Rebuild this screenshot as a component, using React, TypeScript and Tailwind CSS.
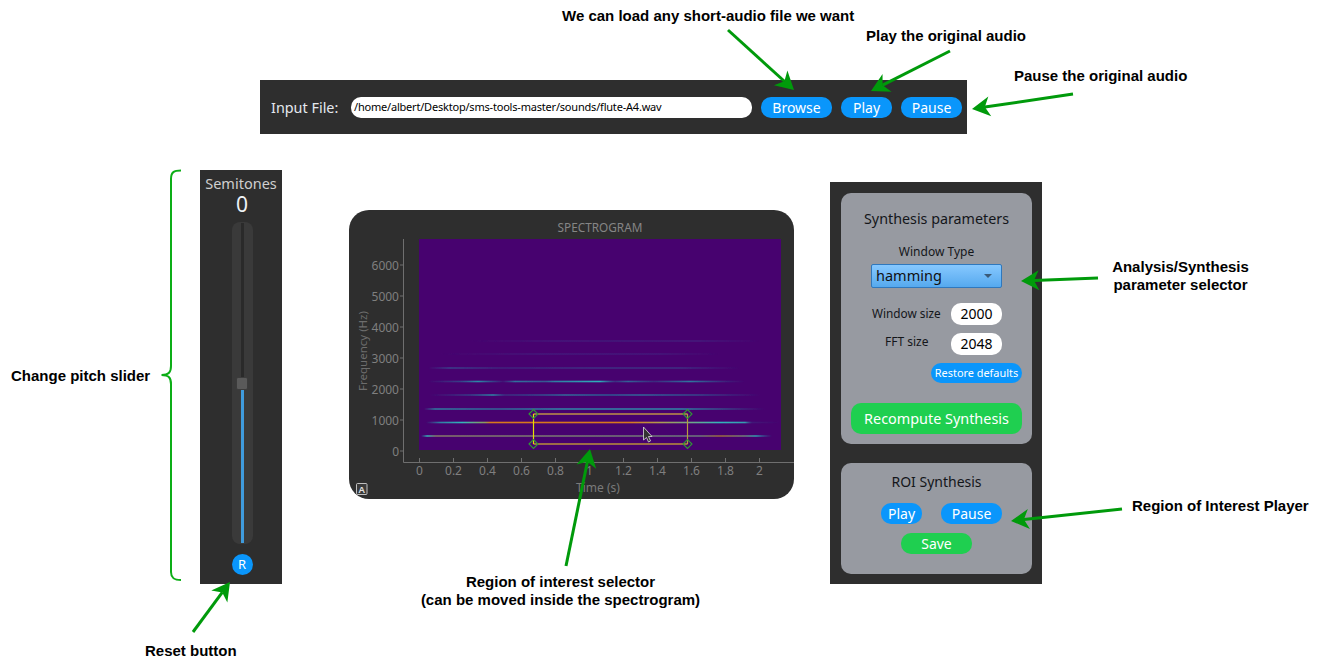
const uiFont = "font-['Noto_Sans',sans-serif]"

const labels = [
	{ text: 'We can load any short-audio file we want', cls: 'left-[562px] top-[7px]' },
	{ text: 'Play the original audio', cls: 'left-[866px] top-[27px]' },
	{ text: 'Pause the original audio', cls: 'left-[1014px] top-[67px]' },
	{ text: 'Change pitch slider', cls: 'left-[11px] top-[367px]' },
	{ text: 'Reset button', cls: 'left-[145px] top-[642px]' },
	{ text: 'Region of Interest Player', cls: 'left-[1132px] top-[497px]' },
]

const arrows = [
	[728, 30, 794, 90],
	[950, 51, 871, 91],
	[1073, 94, 972, 109],
	[1098, 278, 1021, 281],
	[1122, 509, 1011, 521],
	[566, 566, 590, 449],
	[193, 632, 230, 582],
]

// colormap-ish stops for the harmonics: [x, colour, opacity]
type Stop = [number, string, number]
const harmonics: { y: number; h: number; stops: Stop[] }[] = [
	{ y: 341, h: 1.2, stops: [[470, '#3b4f96', 0], [560, '#3b4f96', 0.35], [700, '#3b4f96', 0.4], [760, '#3b4f96', 0]] },
	{ y: 354, h: 1.2, stops: [[440, '#3b4f96', 0], [540, '#3b4f96', 0.35], [660, '#3b4f96', 0.35], [720, '#3b4f96', 0]] },
	{ y: 368, h: 1.4, stops: [[428, '#33609a', 0], [450, '#33609a', 0.7], [500, '#33609a', 0.35], [590, '#33609a', 0.5], [680, '#33609a', 0.5], [740, '#33609a', 0]] },
	{ y: 381.5, h: 1.6, stops: [[428, '#2a6f9c', 0], [460, '#2a6f9c', 0.55], [478, '#2c8ca8', 1], [495, '#2a6f9c', 0.5], [503, '#2a6f9c', 0.15], [515, '#2c8ca8', 0.8], [545, '#2c8ca8', 0.6], [555, '#2c8ca8', 0.9], [600, '#2fb0bb', 1], [615, '#2a6f9c', 0.4], [628, '#2c8ca8', 0.7], [654, '#2a6f9c', 0.35], [690, '#2c8ca8', 0.85], [730, '#2a6f9c', 0.2], [745, '#2a6f9c', 0]] },
	{ y: 395, h: 1.6, stops: [[430, '#2a6f9c', 0], [470, '#2a6f9c', 0.5], [493, '#2c8ca8', 0.9], [505, '#2a6f9c', 0.35], [540, '#2a6f9c', 0.6], [565, '#2c8ca8', 0.7], [610, '#2a6f9c', 0.7], [640, '#2c7ea4', 0.75], [700, '#2a6f9c', 0.55], [750, '#2a6f9c', 0.1], [760, '#2a6f9c', 0]] },
	{ y: 409, h: 1.6, stops: [[424, '#2a8fa8', 0], [435, '#2a8fa8', 0.8], [500, '#2a8fa8', 0.65], [560, '#2a9bb0', 0.8], [680, '#2a9bb0', 0.8], [725, '#2a7f9e', 0.5], [765, '#2a6f9c', 0]] },
	{ y: 422.5, h: 1.6, stops: [[426, '#2a8fa8', 0], [440, '#2a9bb0', 0.8], [462, '#33b5bb', 1], [485, '#8f9a5a', 1], [490, '#d8781e', 1], [630, '#d8781e', 1], [660, '#b09a50', 1], [720, '#33b5bb', 1], [745, '#33b5bb', 0.85], [752, '#2a6f9c', 0.2], [780, '#2a6f9c', 0]] },
	{ y: 436, h: 1.6, stops: [[421, '#2a8fa8', 0], [427, '#33a8b8', 1], [436, '#84776a', 0.95], [700, '#6c767c', 0.95], [720, '#9c683e', 0.95], [745, '#6c767c', 1], [756, '#2f9cb0', 0.95], [772, '#2a6f9c', 0]] },
]

const yTicks = [6000, 5000, 4000, 3000, 2000, 1000, 0]
const xTicks = ['0', '0.2', '0.4', '0.6', '0.8', '1', '1.2', '1.4', '1.6', '1.8', '2']

function Pill({ children, cls }: { children: string; cls: string }) {
	return (
		<button type="button" className={`flex h-[21px] items-center justify-center rounded-[10px] bg-[#0a96fb] text-[14px] text-white ${cls}`}>
			{children}
		</button>
	)
}

function Spectrogram() {
	return (
		<div className="ml-[67px] mt-[40px] h-[289px] w-[445px] overflow-hidden rounded-[20px] bg-[#2e2e2e]">
			<svg viewBox="349 210 445 289" className="block h-full w-full" fontFamily="'Noto Sans', sans-serif">
				<defs>
					{harmonics.map((line) => (
						<linearGradient key={line.y} id={`h${Math.round(line.y)}`} gradientUnits="userSpaceOnUse" x1={line.stops[0][0]} y1="0" x2={line.stops[line.stops.length - 1][0]} y2="0">
							{line.stops.map(([x, color, op]) => (
								<stop
									key={x}
									offset={(x - line.stops[0][0]) / (line.stops[line.stops.length - 1][0] - line.stops[0][0])}
									stopColor={color}
									stopOpacity={op}
								/>
							))}
						</linearGradient>
					))}
					<filter id="soft" x="-5%" y="-500%" width="110%" height="1100%">
						<feGaussianBlur stdDeviation="0.5" />
					</filter>
				</defs>

				<text x="600" y="232" textAnchor="middle" fontSize="11.8" fill="#858585">SPECTROGRAM</text>

				<rect x="419" y="239" width="362" height="211" fill="#47026f" />
				<g filter="url(#soft)">
					{harmonics.map((line) => (
						<rect
							key={line.y}
							x={line.stops[0][0]}
							y={line.y - line.h / 2}
							width={line.stops[line.stops.length - 1][0] - line.stops[0][0]}
							height={line.h}
							fill={`url(#h${Math.round(line.y)})`}
						/>
					))}
				</g>

				<path d="M403.5 239V462.5H794" fill="none" stroke="#6f6f6f" strokeWidth="1" />
				{yTicks.map((v, i) => {
					const y = 265 + i * 31
					return (
						<g key={v}>
							<line x1="400" x2="403" y1={y} y2={y} stroke="#6f6f6f" />
							<text x="399" y={y + 4.5} textAnchor="end" fontSize="12" fill="#7f7f7f">{v}</text>
						</g>
					)
				})}
				{xTicks.map((v, i) => {
					const x = 419.5 + i * 34
					return (
						<g key={v}>
							<line x1={x} x2={x} y1="458" y2="462" stroke="#6f6f6f" />
							<text x={x} y="475" textAnchor="middle" fontSize="12" fill="#7f7f7f">{v}</text>
						</g>
					)
				})}
				<text x="598" y="492" textAnchor="middle" fontSize="12" fill="#7a7a7a">Time (s)</text>
				<text transform="translate(367 351) rotate(-90)" textAnchor="middle" fontSize="11.5" fill="#6d6d6d">Frequency (Hz)</text>

				{/* region of interest */}
				<path d="M533.5 414H687.5" stroke="#a9794e" strokeWidth="1.8" opacity="0.9" fill="none" />
				<path d="M533.5 444H687.5" stroke="#b8903a" strokeWidth="1.5" fill="none" />
				<path d="M533.5 414V444" stroke="#e4e000" strokeWidth="1.2" fill="none" />
				<path d="M687.5 414V444" stroke="#b79c3e" strokeWidth="1.2" fill="none" />
				{[[533.5, 414], [687.5, 414], [533.5, 444], [687.5, 444]].map(([x, y]) => (
					<path key={`${x}-${y}`} d={`M${x - 4.5} ${y}L${x} ${y - 4.5}L${x + 4.5} ${y}L${x} ${y + 4.5}Z`} fill="none" stroke="#2f9a35" strokeWidth="1.1" />
				))}

				{/* mouse cursor */}
				<path d="M643.5 427V440L646.5 437.5L648.5 442L650.5 441L648.5 436.5L652 436.5Z" fill="#333" stroke="#ddd" strokeWidth="0.8" />

				<rect x="356.5" y="483.5" width="10.5" height="11" rx="1" fill="#3a3a3a" stroke="#d0d0d0" strokeWidth="0.9" />
				<text x="361.7" y="493" textAnchor="middle" fontSize="9.5" fontWeight="600" fill="#e0e0e0">A</text>
			</svg>
		</div>
	)
}

function Annotations() {
	return (
		<svg className="pointer-events-none absolute left-0 top-0 h-[666px] w-[1321px]" viewBox="0 0 1321 666">
			<path d="M181 170.5C174 170.5 171 172 171 179V366C171 372 169 375 161.5 375C169 375 171 378 171 384V572C171 578 174 580 181 580" fill="none" stroke="#0cae16" strokeWidth="2" />
			{arrows.map(([x1, y1, x2, y2]) => {
				const len = Math.hypot(x2 - x1, y2 - y1)
				const ux = (x2 - x1) / len
				const uy = (y2 - y1) / len
				const px = -uy
				const py = ux
				const bx = x2 - ux * 18
				const by = y2 - uy * 18
				const nx = x2 - ux * 13
				const ny = y2 - uy * 13
				return (
					<g key={`${x1}-${y1}`}>
						<line x1={x1} y1={y1} x2={nx} y2={ny} stroke="#009a0b" strokeWidth="3" />
						<polygon
							points={`${x2},${y2} ${bx + px * 10},${by + py * 10} ${nx},${ny} ${bx - px * 10},${by - py * 10}`}
							fill="#009a0b"
						/>
					</g>
				)
			})}
		</svg>
	)
}

export default function App() {
	return (
		<div className={`relative h-[666px] w-[1321px] overflow-hidden bg-white pt-[80px] ${uiFont}`}>
			{/* input file bar */}
			<div className="ml-[260px] flex h-[54px] w-[707px] items-center bg-[#2e2e2e] pl-[11px]">
				<span className="mt-[1px] w-[80px] text-[14.4px] text-[#e4e8ee]">Input File:</span>
				<div className="flex h-[21px] w-[401px] items-center rounded-[10px] bg-white pl-[3px] text-[11px] tracking-[-0.2px] text-black">
					/home/albert/Desktop/sms-tools-master/sounds/flute-A4.wav
				</div>
				<div className="ml-[9px] flex gap-[9px]">
					<Pill cls="w-[71px]">Browse</Pill>
					<Pill cls="w-[51px]">Play</Pill>
					<Pill cls="w-[61px]">Pause</Pill>
				</div>
			</div>

			<div className="mt-[36px] flex items-start">
				{/* pitch slider */}
				<div className="ml-[200px] flex h-[414px] w-[82px] flex-col items-center bg-[#2e2e2e] pl-[2px] pt-[3px]">
					<span className="h-[20px] -translate-x-[1px] text-[14.5px] leading-[20px] text-[#cfcfcf]">Semitones</span>
					<span className="h-[24px] text-[21px] leading-[23px] text-[#eef2f6]">0</span>
					<div className="mt-[5px] flex h-[322px] w-[21px] flex-col items-center rounded-[8px] bg-[#3a3a3a] py-[1px]">
						<div className="w-[3px] flex-1 bg-[#2a2a2a]" />
						<div className="h-[13px] w-[12px] rounded-[2px] border border-[#3c3c3c] bg-[#5a5a5a]" />
						<div className="h-[153px] w-[3px] bg-[#3f9bdc]" />
					</div>
					<div className="mt-[10px] flex h-[21px] w-[21px] items-center justify-center rounded-full bg-[#0a96fb] text-[13px] text-white">R</div>
				</div>

				<Spectrogram />

				{/* synthesis panels */}
				<div className="ml-[36px] mt-[12px] flex h-[402px] w-[212px] flex-col gap-[19px] bg-[#2e2e2e] pb-[10px] pl-[11px] pr-[10px] pt-[11px]">
					<div className="flex h-[251px] flex-col rounded-[10px] bg-[#979aa1] text-[#14161a]">
						<div className="mt-[16px] text-center text-[14.3px] leading-[20px]">Synthesis parameters</div>
						<div className="mt-[15px] text-center text-[12px] leading-[16px]">Window Type</div>
						<div className="ml-[30px] mt-[4px] flex h-[24px] w-[131px] items-center justify-between rounded-[2px] border border-[#2f78bd] bg-gradient-to-b from-[#86c8ff] to-[#55a9ee] pl-[4px] pr-[9px] text-[14.5px] text-[#111]">
							hamming
							<span className="h-0 w-0 border-x-[4px] border-t-[4px] border-x-transparent border-t-[#3a5a78]" />
						</div>
						<div className="ml-[31px] mt-[15px] flex h-[22px] w-[130px] items-center justify-between">
							<span className="text-[11.8px]">Window size</span>
							<span className="flex h-[22px] w-[51px] items-center justify-center rounded-[10px] bg-white pb-[1px] text-[14px] text-black">2000</span>
						</div>
						<div className="ml-[30px] mt-[8px] flex h-[22px] w-[131px] justify-between">
							<span className="ml-[14px] text-[12px] leading-[17px]">FFT size</span>
							<span className="flex h-[22px] w-[51px] items-center justify-center rounded-[10px] bg-white pb-[1px] text-[14px] text-black">2048</span>
						</div>
						<div className="ml-[90px] mt-[8px] flex h-[20px] w-[91px] items-center justify-center rounded-[10px] bg-[#0a96fb] text-[10.9px] text-white">
							Restore defaults
						</div>
						<div className="ml-[10px] mt-[20px] flex h-[31px] w-[171px] items-center justify-center rounded-[10px] bg-[#1fcf50] text-[14.4px] text-white">
							Recompute Synthesis
						</div>
					</div>

					<div className="flex h-[111px] flex-col rounded-[10px] bg-[#979aa1]">
						<div className="mt-[9px] text-center text-[14px] leading-[20px] text-[#14161a]">ROI Synthesis</div>
						<div className="ml-[40px] mt-[11px] flex gap-[19px]">
							<Pill cls="w-[41px]">Play</Pill>
							<Pill cls="w-[61px]">Pause</Pill>
						</div>
						<button type="button" className="mx-auto mt-[9px] flex h-[21px] w-[71px] items-center justify-center rounded-[10px] bg-[#1fcf50] text-[14px] text-white">
							Save
						</button>
					</div>
				</div>
			</div>

			<Annotations />

			{labels.map((label) => (
				<span key={label.text} className={`absolute whitespace-nowrap font-['Liberation_Sans',sans-serif] text-[15px] font-bold leading-[17px] text-black ${label.cls}`}>
					{label.text}
				</span>
			))}
			<div className="absolute left-[1080.5px] top-[258px] w-[200px] text-center font-['Liberation_Sans',sans-serif] text-[15px] font-bold leading-[18px] text-black">
				Analysis/Synthesis
				<br />
				parameter selector
			</div>
			<div className="absolute left-[400.5px] top-[573px] w-[320px] text-center font-['Liberation_Sans',sans-serif] text-[15px] font-bold leading-[18px] text-black">
				Region of interest selector
				<br />
				(can be moved inside the spectrogram)
			</div>
		</div>
	)
}
